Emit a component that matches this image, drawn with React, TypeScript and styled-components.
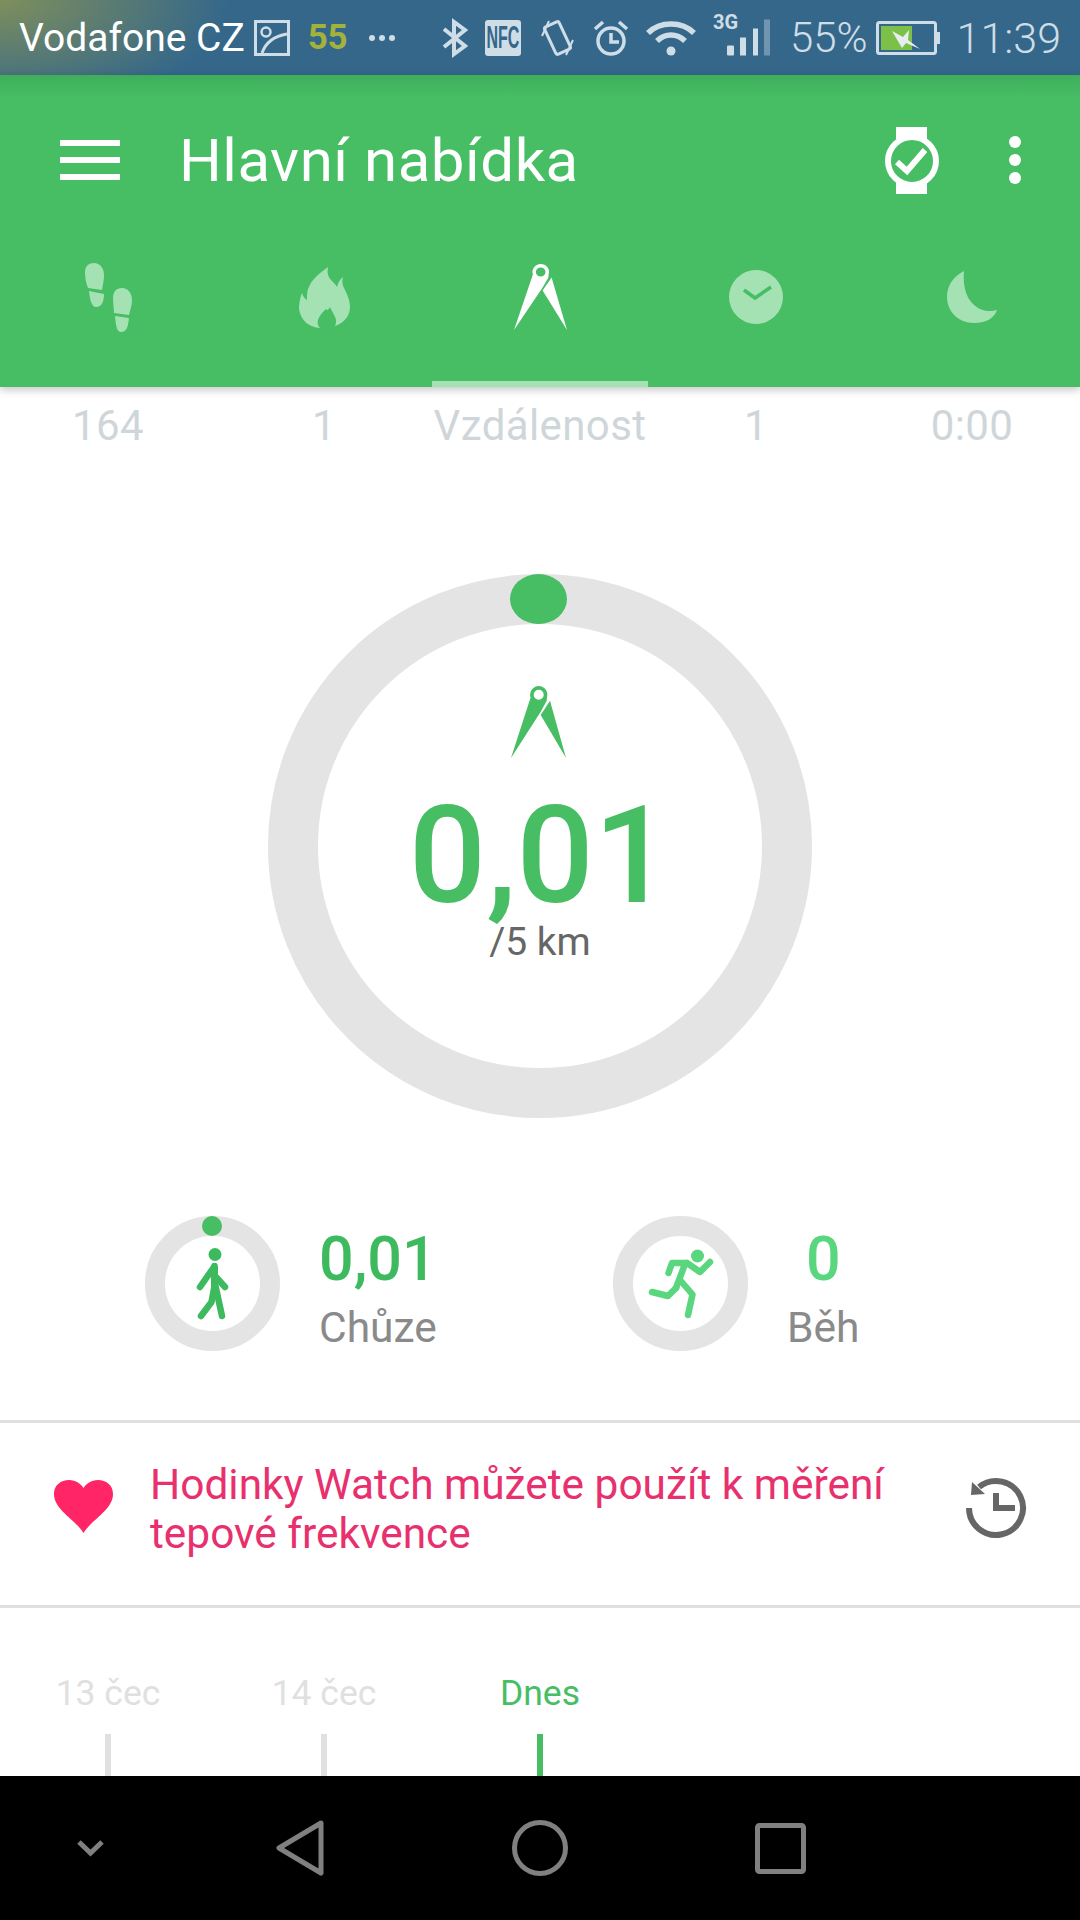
import styled, { createGlobalStyle } from 'styled-components'

const GREEN = '#47bd64'
const TAB_DIM = '#a4e2b4'

const GlobalStyle = createGlobalStyle`
  html, body {
    margin: 0;
    padding: 0;
    background: #fff;
  }
  * {
    box-sizing: border-box;
  }
`

const Screen = styled.div`
  width: 1080px;
  height: 1920px;
  display: flex;
  flex-direction: column;
  overflow: hidden;
  background: #fff;
  font-family: Roboto, "Liberation Sans", sans-serif;
`

const StatusBar = styled.div`
  height: 75px;
  flex: none;
  display: flex;
  align-items: center;
  justify-content: space-between;
  padding: 0 19px;
  background: radial-gradient(ellipse 230px 110px at 0 0, #7f8f5c 0%, #34678a00 100%), #34678a;
  color: #cfdde6;
`

const StatusGroup = styled.div`
  display: flex;
  align-items: center;
`

const Carrier = styled.span`
  font-size: 39px;
  color: #fff;
  margin-right: 9px;
`

const StatusCount = styled.span`
  font-size: 35px;
  font-weight: 700;
  color: #a3b23c;
  letter-spacing: -0.5px;
  margin: 0 21px 0 18px;
`

const StatusText = styled.span<{ $gap: number; $size: number }>`
  font-size: ${props => props.$size}px;
  font-weight: 300;
  margin-left: ${props => props.$gap}px;
`

const StatusIcon = styled.svg<{ $gap?: number }>`
  display: block;
  flex: none;
  overflow: visible;
  margin-left: ${props => props.$gap || 0}px;
`

const NfcBadge = styled.span`
  width: 36px;
  height: 36px;
  margin-left: 16px;
  border-radius: 3px;
  background: #cfdde6;
  display: flex;
  align-items: center;
  justify-content: center;

  span {
    flex: none;
    color: #34678a;
    font-family: "Liberation Sans", sans-serif;
    font-size: 32px;
    font-weight: 700;
    white-space: nowrap;
    transform: scaleX(0.5);
  }
`

const AppBar = styled.header`
  height: 312px;
  flex: none;
  display: flex;
  flex-direction: column;
  background: linear-gradient(#3fae5c, ${GREEN} 22px);
  box-shadow: 0 3px 8px rgba(0, 0, 0, 0.22);
  position: relative;
  z-index: 1;
`

const Toolbar = styled.div`
  height: 138px;
  flex: none;
  display: flex;
  align-items: center;
  padding: 32px 59px 0 60px;
  color: #fff;
`

const Burger = styled.div`
  width: 60px;
  height: 40px;
  flex: none;
  display: flex;
  flex-direction: column;
  justify-content: space-between;

  span {
    height: 6px;
    background: #fff;
  }
`

const Title = styled.h1`
  margin: 0 0 0 59px;
  flex: 1;
  font-size: 60px;
  font-weight: 400;
  letter-spacing: 0.5px;
`

const MoreDots = styled.div`
  display: flex;
  flex-direction: column;
  gap: 6px;
  margin-left: 70px;

  span {
    width: 12px;
    height: 12px;
    border-radius: 50%;
    background: #fff;
  }
`

const TabRow = styled.div`
  flex: 1;
  display: grid;
  grid-template-columns: repeat(5, 216px);
`

const Tab = styled.div<{ $active?: boolean }>`
  display: flex;
  align-items: center;
  justify-content: center;
  color: ${props => (props.$active ? '#fff' : TAB_DIM)};
  border-bottom: 6px solid ${props => (props.$active ? TAB_DIM : 'transparent')};
`

const Content = styled.main`
  flex: 1;
  display: flex;
  flex-direction: column;
  min-height: 0;
`

const LabelRow = styled.div`
  display: grid;
  grid-template-columns: repeat(5, 216px);
  height: 78px;
  padding-top: 15px;
`

const TabLabel = styled.span`
  text-align: center;
  font-size: 42px;
  line-height: 47px;
  letter-spacing: 0.4px;
  color: #cfd6da;
`

const RingWrap = styled.div`
  align-self: center;
  margin-top: 109px;
  width: 544px;
  height: 544px;
  border-radius: 50%;
  border: 50px solid #e4e4e4;
  display: flex;
  flex-direction: column;
  align-items: center;
  position: relative;
`

const RingDot = styled.span`
  position: absolute;
  top: -50px;
  left: 50%;
  width: 57px;
  height: 50px;
  margin-left: -30px;
  border-radius: 50%;
  background: ${GREEN};
`

const CompassSlot = styled.div`
  margin: 62px 3px 0 0;
  color: ${GREEN};
`

const Distance = styled.div`
  margin-top: 18px;
  font-size: 136px;
  line-height: 159px;
  font-weight: 500;
  color: ${GREEN};
`

const Goal = styled.div`
  margin-top: -16px;
  font-size: 39px;
  line-height: 47px;
  color: #666;
`

const ActivityRow = styled.div`
  height: 135px;
  margin-top: 98px;
  display: grid;
  grid-template-columns: 468px 1fr;
  padding-left: 145px;
`

const Activity = styled.div`
  display: flex;
  align-items: center;
`

const MiniRing = styled.div<{ $color: string }>`
  width: 135px;
  height: 135px;
  flex: none;
  border-radius: 50%;
  border: 20px solid #e4e4e4;
  display: flex;
  align-items: center;
  justify-content: center;
  position: relative;
  color: ${props => props.$color};
`

const MiniDot = styled.span`
  position: absolute;
  top: -20px;
  left: 50%;
  width: 20px;
  height: 20px;
  margin-left: -11px;
  border-radius: 50%;
  background: ${GREEN};
`

const ActivityText = styled.div`
  margin-left: 39px;
  padding-top: 8px;
  display: flex;
  flex-direction: column;
  align-items: center;
`

const ActivityValue = styled.span<{ $color: string }>`
  font-size: 61px;
  line-height: 70px;
  font-weight: 500;
  color: ${props => props.$color};
`

const ActivityName = styled.span`
  font-size: 42.5px;
  line-height: 47px;
  margin-top: 10px;
  color: #8a8a8a;
`

const Notice = styled.div`
  height: 188px;
  margin-top: 69px;
  flex: none;
  display: flex;
  align-items: center;
  padding: 0 54px 15px 54px;
  border-top: 3px solid #e0e0e0;
  border-bottom: 3px solid #e0e0e0;
`

const NoticeText = styled.p`
  flex: 1;
  margin: 5px 0 0 37px;
  font-size: 42.4px;
  line-height: 49px;
  color: #e8306e;
`

const DateRow = styled.div`
  flex: 1;
  display: grid;
  grid-template-columns: repeat(3, 216px);
  min-height: 0;
`

const DateCol = styled.div<{ $active?: boolean }>`
  display: flex;
  flex-direction: column;
  align-items: center;
  padding-top: 65px;
  font-size: 35.5px;
  line-height: 41px;
  color: ${props => (props.$active ? GREEN : '#e0e0e0')};

  &::after {
    content: '';
    width: 6px;
    flex: 1;
    margin-top: 20px;
    background: currentColor;
  }
`

const NavBar = styled.nav`
  height: 144px;
  flex: none;
  background: #000;
  display: grid;
  grid-template-columns: 180px 240px 240px 240px;
  align-items: center;
  justify-items: center;
  color: #808080;
`

// Dividers of a compass, used on the active tab and inside the big ring
const CompassIcon = ({ width, height }: { width: number; height: number }) => (
  <StatusIcon width={width} height={height} viewBox="0 0 55 72" preserveAspectRatio="none">
    <path
      fillRule="evenodd"
      fill="currentColor"
      d="M27.700 0a8.700 8.700 0 0 1 8.300 11.200L35.700 14.700 29.700 25.700 0 72 19.600 11.500A8.700 8.700 0 0 1 27.700 0ZM27.700 3.700a5 5 0 1 0 0 10 5 5 0 0 0 0-10Z"
    />
    <path fill="currentColor" d="M39 14.700 55 72 29.700 29Z" />
  </StatusIcon>
)

const StepsIcon = () => (
  <StatusIcon width={47} height={69} viewBox="0 0 47 69">
    <g fill="currentColor">
      <path d="M0 9C0 3 4 0 9 0c6 0 10 5 10 12 0 5-1 9-2 15L3 25C1 20 0 15 0 9Z" />
      <path d="M4 28l15 3c0 7-2 13-8 13-4 0-6-6-7-16Z" />
      <path d="M28 35c0-6 3-10 9-10s10 5 10 12c0 6-2 10-3 15l-15-2c0-5-1-9-1-15Z" />
      <path d="M30 53l14 2c-1 8-2 14-8 14-4 0-5-5-6-16Z" />
    </g>
  </StatusIcon>
)

const FlameIcon = () => (
  <StatusIcon width={51} height={61} viewBox="0 0 51 61">
    <path
      fill="currentColor"
      d="M29 0c-1 6 0 10 4 14 2 2 4 4 5 6 1-4 3-8 6-10-1 4-1 7 1 11 3 6 6 12 6 19 0 9-6 16-15 19 2-4 1-8-1-11-1-3-3-5-4-8-1 2-2 3-3 3-1-1-2-1-2 0-3 3-6 6-7 10-1 3 0 6 2 8C10 60 2 54 0 42c0-6 1-11 3-16 1 3 2 5 5 7 0-6 0-10 2-13 3-8 11-14 19-20Z"
    />
  </StatusIcon>
)

const GoalClockIcon = () => (
  <StatusIcon width={54} height={54} viewBox="0 0 54 54">
    <circle cx="27" cy="27" r="27" fill="currentColor" />
    <path d="M15 20l11 8 16-11" fill="none" stroke={GREEN} strokeWidth="3.500" />
  </StatusIcon>
)

const MoonIcon = () => (
  <StatusIcon width={51} height={52} viewBox="0 0 51 52">
    <path
      fill="currentColor"
      d="M17 0C5 6 0 16 0 26c0 14 11 26 27 26 11 0 20-4 23-13C34 44 14 32 17 0Z"
    />
  </StatusIcon>
)

const WalkerIcon = () => (
  <StatusIcon width={31} height={71} viewBox="0 0 31 71">
    <circle cx="18" cy="6.500" r="6.500" fill="currentColor" />
    <g fill="none" stroke="currentColor" strokeWidth="6.500" strokeLinecap="round" strokeLinejoin="round">
      <path d="M17 19 3 39" />
      <path d="M18 28 28 39" />
      <path d="M17.500 18v20l-3 16L4 68" />
      <path d="M18.500 38 25 68" />
    </g>
    <path d="M14 18h7v24h-7z" fill="currentColor" />
  </StatusIcon>
)

const RunnerIcon = () => (
  <StatusIcon width={63} height={69} viewBox="0 0 63 69">
    <circle cx="48.500" cy="7" r="6.500" fill="currentColor" />
    <g fill="none" stroke="currentColor" strokeWidth="6.500" strokeLinecap="round" strokeLinejoin="round">
      <path d="M19.500 24 23 14h14" />
      <path d="M38 14 51 23l10-10" />
      <path d="M36 15 27 39" />
      <path d="M27 39l-8 8L3 43" />
      <path d="M31 31l12.500 14.500L39 66" />
    </g>
  </StatusIcon>
)

const HeartIcon = () => (
  <StatusIcon width={59} height={53} viewBox="0 0 59 53">
    <path
      fill="#ff2566"
      d="M29.500 53C22 40 0 30 0 14 0 5 7 0 15 0c7 0 12 4 14.500 8C32 4 37 0 44 0c8 0 15 5 15 14C59 30 37 40 29.500 53Z"
    />
  </StatusIcon>
)

const HistoryIcon = () => (
  <StatusIcon width={60} height={56} viewBox="0 0 60 56">
    <g fill="none" stroke="#666" strokeWidth="6">
      <path d="M3 29A27 27 0 1 0 13 8" />
      <path d="M30 14v15h19" />
    </g>
    <path d="M6 3 5 16 19 15Z" fill="#666" />
  </StatusIcon>
)

const WatchCheckIcon = () => (
  <StatusIcon width={54} height={67} viewBox="0 0 54 67">
    <path fill="#fff" d="M11 0h31v12H11zM11 55h31v12H11z" />
    <circle cx="27" cy="34" r="24" fill="none" stroke="#fff" strokeWidth="6" />
    <path d="M12 35 22 44 40 23" fill="none" stroke="#fff" strokeWidth="6" />
  </StatusIcon>
)

const App = () => (
  <Screen>
    <GlobalStyle />
    <StatusBar>
      <StatusGroup>
        <Carrier>Vodafone CZ</Carrier>
        <StatusIcon width={36} height={36} viewBox="0 0 36 36">
          <rect x="1.500" y="1.500" width="33" height="33" fill="none" stroke="currentColor" strokeWidth="3" />
          <circle cx="12" cy="12" r="4.500" fill="none" stroke="currentColor" strokeWidth="2.500" />
          <path d="M8 33C12 22 20 16 33 14" fill="none" stroke="currentColor" strokeWidth="3" />
        </StatusIcon>
        <StatusCount>55</StatusCount>
        <StatusIcon width={28} height={8} viewBox="0 0 28 8">
          <g fill="currentColor">
            <circle cx="4" cy="4" r="3" />
            <circle cx="14" cy="4" r="3" />
            <circle cx="24" cy="4" r="3" />
          </g>
        </StatusIcon>
      </StatusGroup>
      <StatusGroup>
        <StatusIcon width={28} height={38} viewBox="0 0 28 38">
          <path d="M3 10 24 27 13 35V3l11 8L3 28" fill="none" stroke="currentColor" strokeWidth="4" />
        </StatusIcon>
        <NfcBadge><span>NFC</span></NfcBadge>
        <StatusIcon $gap={20} width={33} height={38} viewBox="0 0 33 38">
          <g fill="none" stroke="currentColor">
            <rect x="-8" y="-15" width="16" height="30" rx="2" transform="translate(16.500 19) rotate(-25)" strokeWidth="3" />
            <path d="M1 17 8 2M25 36l7-15" strokeWidth="2" />
          </g>
        </StatusIcon>
        <StatusIcon $gap={19} width={36} height={38} viewBox="0 0 36 38">
          <g fill="none" stroke="currentColor" strokeWidth="3.500">
            <circle cx="18" cy="22" r="13" />
            <path d="M18 14v9h8" />
            <path d="M2 10 10 3M34 10 26 3" />
          </g>
        </StatusIcon>
        <StatusIcon $gap={17} width={50} height={36} viewBox="0 0 50 36">
          <g fill="none" stroke="currentColor" strokeWidth="5.500">
            <path d="M2 13C14 1 36 1 48 13" />
            <path d="M11 21C19 13 31 13 39 21" />
          </g>
          <circle cx="25" cy="31" r="4.500" fill="currentColor" />
        </StatusIcon>
        <StatusIcon $gap={17} width={57} height={50} viewBox="0 0 57 50">
          <text x="0" y="15.500" fontFamily="Roboto" fontSize="20" fontWeight="700" fill="currentColor">3G</text>
          <g fill="currentColor">
            <rect x="14" y="32.500" width="7" height="10" rx="1" />
            <rect x="27" y="24.500" width="6" height="18" />
            <rect x="40" y="15.500" width="5" height="27" />
            <rect x="51" y="6.500" width="6" height="36" opacity="0.4" />
          </g>
        </StatusIcon>
        <StatusText $gap={20} $size={42}>55%</StatusText>
        <StatusIcon $gap={8} width={64} height={34} viewBox="0 0 64 34">
          <rect x="1.500" y="1.500" width="58" height="31" rx="2" fill="none" stroke="currentColor" strokeWidth="3" />
          <rect x="5" y="5" width="31" height="24" fill="#7cc04a" />
          <rect x="60" y="11" width="4" height="12" fill="currentColor" />
          <path d="M16 10l11 6 6-7-1 10 12 9-14-6-4 5Z" fill="#e8edf0" />
        </StatusIcon>
        <StatusText $gap={17} $size={43}>11:39</StatusText>
      </StatusGroup>
    </StatusBar>

    <AppBar>
      <Toolbar>
        <Burger>
          <span />
          <span />
          <span />
        </Burger>
        <Title>Hlavní nabídka</Title>
        <WatchCheckIcon />
        <MoreDots>
          <span />
          <span />
          <span />
        </MoreDots>
      </Toolbar>
      <TabRow>
        <Tab><StepsIcon /></Tab>
        <Tab><FlameIcon /></Tab>
        <Tab $active><CompassIcon width={53} height={66} /></Tab>
        <Tab><GoalClockIcon /></Tab>
        <Tab><MoonIcon /></Tab>
      </TabRow>
    </AppBar>

    <Content>
      <LabelRow>
        <TabLabel>164</TabLabel>
        <TabLabel>1</TabLabel>
        <TabLabel>Vzdálenost</TabLabel>
        <TabLabel>1</TabLabel>
        <TabLabel>0:00</TabLabel>
      </LabelRow>

      <RingWrap>
        <RingDot />
        <CompassSlot><CompassIcon width={55} height={72} /></CompassSlot>
        <Distance>0,01</Distance>
        <Goal>/5 km</Goal>
      </RingWrap>

      <ActivityRow>
        <Activity>
          <MiniRing $color="#3dba5e">
            <MiniDot />
            <WalkerIcon />
          </MiniRing>
          <ActivityText>
            <ActivityValue $color="#3dba5e">0,01</ActivityValue>
            <ActivityName>Chůze</ActivityName>
          </ActivityText>
        </Activity>
        <Activity>
          <MiniRing $color="#5ad67f">
            <RunnerIcon />
          </MiniRing>
          <ActivityText>
            <ActivityValue $color="#5ad67f">0</ActivityValue>
            <ActivityName>Běh</ActivityName>
          </ActivityText>
        </Activity>
      </ActivityRow>

      <Notice>
        <HeartIcon />
        <NoticeText>Hodinky Watch můžete použít k měření tepové frekvence</NoticeText>
        <HistoryIcon />
      </Notice>

      <DateRow>
        <DateCol>13 čec</DateCol>
        <DateCol>14 čec</DateCol>
        <DateCol $active>Dnes</DateCol>
      </DateRow>
    </Content>

    <NavBar>
      <StatusIcon width={27} height={16} viewBox="0 0 27 16">
        <path d="M2 2l11.500 11L25 2" fill="none" stroke="currentColor" strokeWidth="5" />
      </StatusIcon>
      <StatusIcon width={48} height={56} viewBox="0 0 48 56">
        <path d="M45 3 3 28 45 53Z" fill="none" stroke="currentColor" strokeWidth="5" strokeLinejoin="round" />
      </StatusIcon>
      <StatusIcon width={56} height={56} viewBox="0 0 56 56">
        <circle cx="28" cy="28" r="25.500" fill="none" stroke="currentColor" strokeWidth="5" />
      </StatusIcon>
      <StatusIcon width={51} height={51} viewBox="0 0 51 51">
        <rect x="2.500" y="2.500" width="46" height="46" rx="2" fill="none" stroke="currentColor" strokeWidth="5" />
      </StatusIcon>
    </NavBar>
  </Screen>
)

export default App
